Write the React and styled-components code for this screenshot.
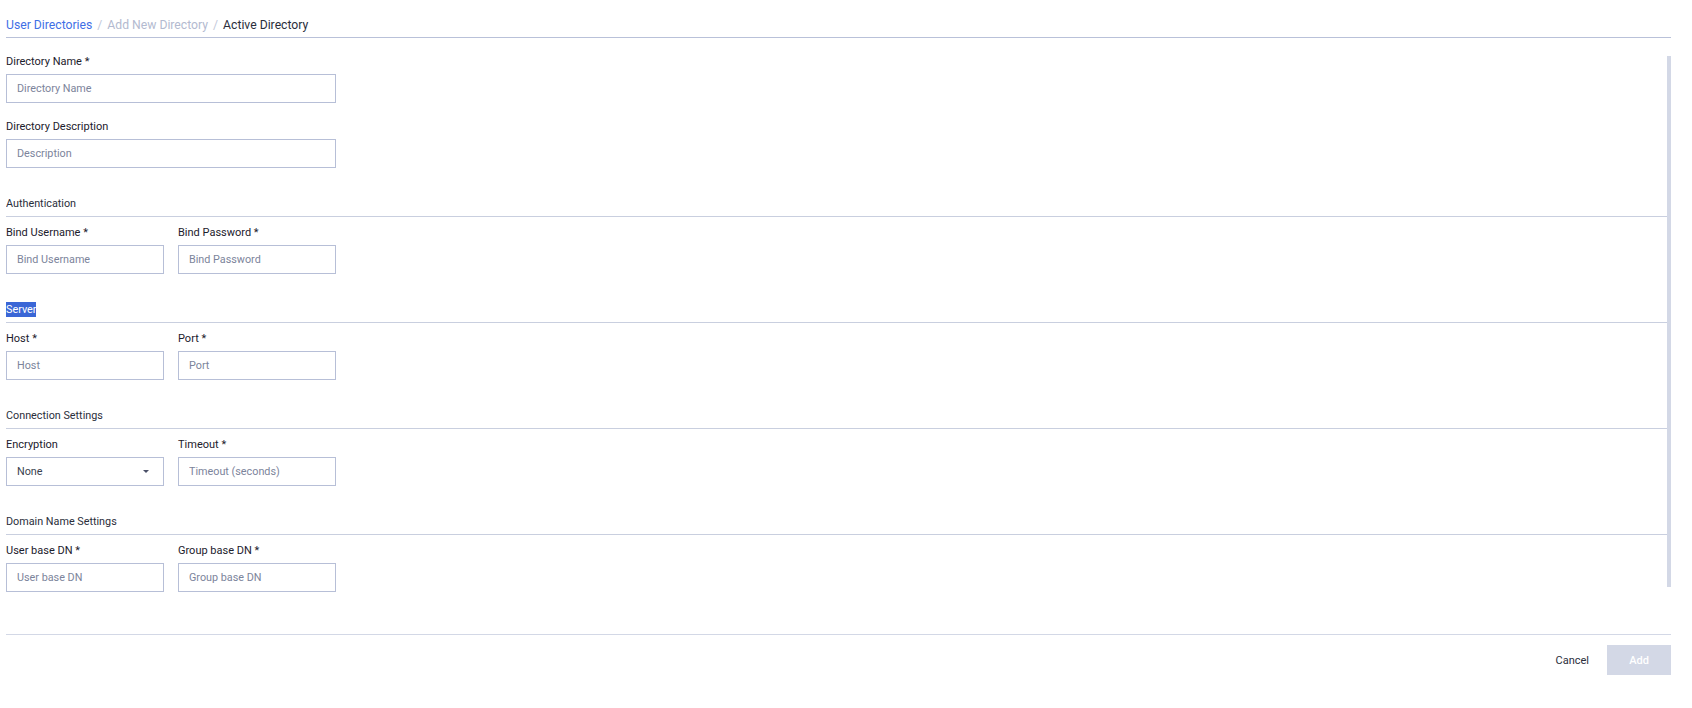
import React from "react";
import styled, { createGlobalStyle } from "styled-components";

const Global = createGlobalStyle`
  html, body { margin: 0; padding: 0; background: #ffffff; }
  body { font-family: Roboto, "Liberation Sans", sans-serif; color: #2e3240; }
  * { box-sizing: border-box; }
`;

const Page = styled.div`
  width: 1692px;
  height: 708px;
  padding: 0 21px 0 6px;
  display: flex;
  flex-direction: column;
  background: #fff;
`;

const Breadcrumbs = styled.nav`
  height: 38px;
  padding-top: 16px;
  border-bottom: 1px solid #b9c1d9;
  display: flex;
  align-items: flex-start;
  font-size: 12.2px;
  line-height: 18px;
`;

const Crumb = styled.span`
  color: ${(p) => (p.$tone === "link" ? "#3f6fe6" : p.$tone === "muted" ? "#b3bad0" : "#2a2e3b")};
`;

const Sep = styled.span`
  color: #c3c9da;
  margin: 0 5px;
`;

const ScrollArea = styled.div`
  margin-top: 14px;
  height: 548px;
  display: flex;
  align-items: stretch;
`;

const ScrollBody = styled.div`
  flex: 1;
  min-width: 0;
  overflow: hidden;
`;

const ScrollTrack = styled.div`
  width: 4px;
  padding-top: 4px;
  flex-shrink: 0;
`;

const ScrollThumb = styled.div`
  width: 4px;
  height: 531px;
  background: #d3d8e6;
`;

const Form = styled.div`
  display: flex;
  flex-direction: column;
  padding: 2px 0 24px 0;
`;

const Field = styled.div`
  display: flex;
  flex-direction: column;
  gap: 4px;
  width: ${(p) => p.$w || "330px"};
  margin-top: ${(p) => p.$mt || "0px"};
`;

const Label = styled.label`
  font-size: 11px;
  line-height: 16px;
  font-weight: 400;
  color: #1c202c;
`;

const Input = styled.input`
  height: 29px;
  width: 100%;
  border: 1px solid #b7bfd7;
  border-radius: 0;
  padding: 0 10px;
  font-family: Roboto, "Liberation Sans", sans-serif;
  font-size: 10.8px;
  color: #2e3240;
  outline: none;
  &::placeholder { color: #7c849b; }
`;

const SelectBox = styled.div`
  height: 29px;
  width: 100%;
  border: 1px solid #b7bfd7;
  padding: 0 14px 0 10px;
  display: flex;
  align-items: center;
  justify-content: space-between;
  font-size: 10.8px;
  color: #3a3f4e;
`;

const Caret = styled.span`
  width: 0;
  height: 0;
  border-left: 3px solid transparent;
  border-right: 3px solid transparent;
  border-top: 3px solid #4a5068;
`;

const Section = styled.div`
  margin-top: 28px;
  display: flex;
  flex-direction: column;
`;

const SectionTitle = styled.div`
  font-size: 10.8px;
  line-height: 16px;
  padding-bottom: 4px;
  border-bottom: 1px solid #c9cfdf;
  color: #2a2e3b;
  margin-bottom: 8px;
`;

const Highlight = styled.span`
  background: #3a66d6;
  color: #fff;
  padding: 1px 0;
`;

const Row = styled.div`
  display: grid;
  grid-template-columns: 158px 158px;
  column-gap: 14px;
`;

const Footer = styled.div`
  margin-top: 34px;
  border-top: 1px solid #d3d8e6;
  padding-top: 10px;
  display: flex;
  justify-content: flex-end;
  align-items: center;
  gap: 16px;
`;

const TextButton = styled.button`
  border: none;
  background: none;
  font-family: Roboto, "Liberation Sans", sans-serif;
  font-size: 11px;
  color: #2a2e3b;
  padding: 0 2px;
  cursor: pointer;
`;

const PrimaryButton = styled.button`
  width: 64px;
  height: 30px;
  border: none;
  background: #d3d8e6;
  color: #ffffff;
  font-family: Roboto, "Liberation Sans", sans-serif;
  font-size: 11px;
  font-weight: 500;
`;

function TextField({ label, placeholder, w }) {
  return (
    <Field $w={w}>
      <Label>{label}</Label>
      <Input placeholder={placeholder} />
    </Field>
  );
}

export default function App() {
  return (
    <>
      <Global />
      <Page>
        <Breadcrumbs>
          <Crumb $tone="link">User Directories</Crumb>
          <Sep>/</Sep>
          <Crumb $tone="muted">Add New Directory</Crumb>
          <Sep>/</Sep>
          <Crumb>Active Directory</Crumb>
        </Breadcrumbs>
        <ScrollArea>
          <ScrollBody>
            <Form>
              <TextField label="Directory Name *" placeholder="Directory Name" />
              <Field $mt="16px">
                <Label>Directory Description</Label>
                <Input placeholder="Description" />
              </Field>

              <Section>
                <SectionTitle>Authentication</SectionTitle>
                <Row>
                  <TextField w="100%" label="Bind Username *" placeholder="Bind Username" />
                  <TextField w="100%" label="Bind Password *" placeholder="Bind Password" />
                </Row>
              </Section>

              <Section>
                <SectionTitle>
                  <Highlight>Server</Highlight>
                </SectionTitle>
                <Row>
                  <TextField w="100%" label="Host *" placeholder="Host" />
                  <TextField w="100%" label="Port *" placeholder="Port" />
                </Row>
              </Section>

              <Section>
                <SectionTitle>Connection Settings</SectionTitle>
                <Row>
                  <Field $w="100%">
                    <Label>Encryption</Label>
                    <SelectBox>
                      <span>None</span>
                      <Caret />
                    </SelectBox>
                  </Field>
                  <TextField w="100%" label="Timeout *" placeholder="Timeout (seconds)" />
                </Row>
              </Section>

              <Section>
                <SectionTitle>Domain Name Settings</SectionTitle>
                <Row>
                  <TextField w="100%" label="User base DN *" placeholder="User base DN" />
                  <TextField w="100%" label="Group base DN *" placeholder="Group base DN" />
                </Row>
              </Section>
            </Form>
          </ScrollBody>
          <ScrollTrack>
            <ScrollThumb />
          </ScrollTrack>
        </ScrollArea>
        <Footer>
          <TextButton>Cancel</TextButton>
          <PrimaryButton disabled>Add</PrimaryButton>
        </Footer>
      </Page>
    </>
  );
}
